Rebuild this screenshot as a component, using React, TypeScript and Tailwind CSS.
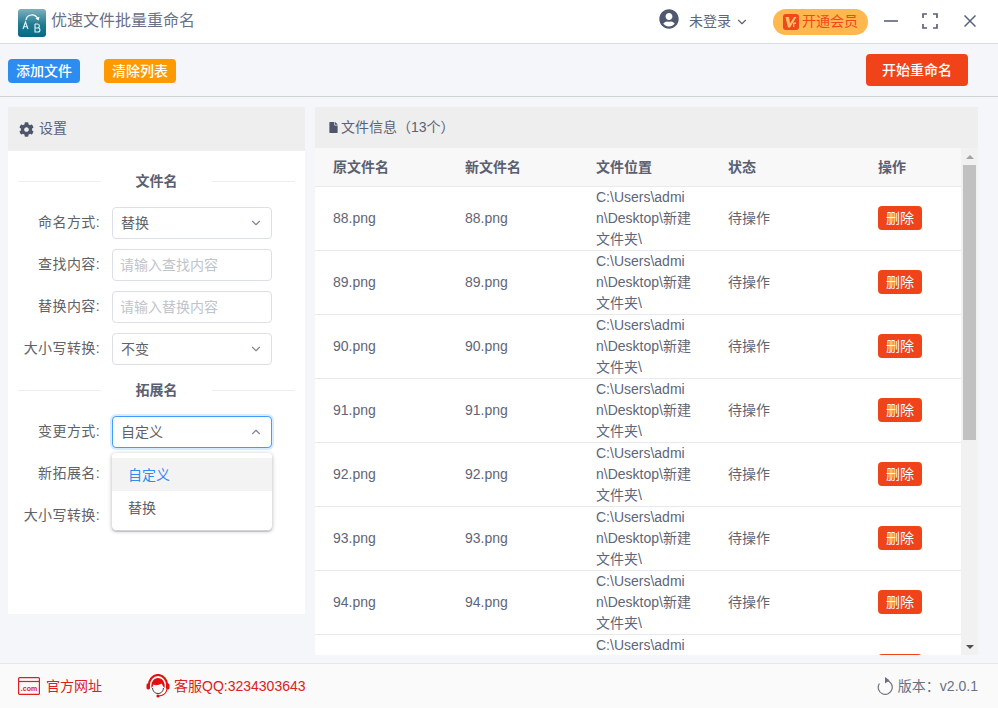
import React from 'react';
import { ChevronDown, ChevronUp } from 'lucide-react';
import { FaCog, FaFile, FaUserCircle } from 'react-icons/fa';

// Rows of the file table that fit in the visible area
const ROWS = ['88', '89', '90', '91', '92', '93', '94', '95'];
const COLUMNS = ['原文件名', '新文件名', '文件位置', '状态', '操作'];
const GRID = 'grid grid-cols-[132px_131px_132px_150px_1fr]';

function Logo() {
  return (
    <svg width="28" height="28" viewBox="0 0 28 28" className="shrink-0 mt-[3px]">
      <defs>
        <linearGradient id="logoBg" x1="0" y1="0" x2="0" y2="1">
          <stop offset="0" stopColor="#7fb0bc" />
          <stop offset="0.55" stopColor="#1f7b92" />
          <stop offset="1" stopColor="#056a84" />
        </linearGradient>
      </defs>
      <rect width="28" height="28" rx="3" fill="url(#logoBg)" />
      <path d="M8 11 C9 5 17 4 20 10" fill="none" stroke="#fff" strokeWidth="1.2" />
      <path d="M17.5 9.5 L20.6 11.5 L21.5 7.8 Z" fill="#fff" />
      <path d="M5 20 L7.5 13 L10 20 M6 17.8 H9" fill="none" stroke="#e8f4f7" strokeWidth="1.1" />
      <path d="M17 15 V23 H20 C22.6 23 22.6 19 20 19 H17 M17 15 H19.6 C22 15 22 19 19.6 19" fill="none" stroke="#e8f4f7" strokeWidth="1.1" />
    </svg>
  );
}

function VipIcon() {
  return (
    <svg width="16" height="16" viewBox="0 0 16 16" className="shrink-0">
      <rect width="16" height="16" rx="3" fill="#f0481a" />
      <path d="M2.5 3 L6 3 L7 9.5 L11 3 L13.5 3 L7 13.5 L5 13.5 Z" fill="#ffc06a" />
      <path d="M10 8.5 H13 V10 H11.3 V13 H10 Z" fill="#ffc06a" />
    </svg>
  );
}

function WindowButtons() {
  return (
    <div className="flex items-center text-[#5a6278] -mt-[2px]">
      <svg width="14" height="14" viewBox="0 0 14 14" className="ml-[16px]">
        <path d="M0 7 H14" stroke="currentColor" strokeWidth="1.6" />
      </svg>
      <svg width="16" height="16" viewBox="0 0 16 16" className="ml-[24px]">
        <path d="M1 5 V1 H5 M11 1 H15 V5 M15 11 V15 H11 M5 15 H1 V11" fill="none" stroke="currentColor" strokeWidth="1.7" />
      </svg>
      <svg width="12" height="12" viewBox="0 0 12 12" className="ml-[26px] mr-[22px]">
        <path d="M0.5 0.5 L11.5 11.5 M11.5 0.5 L0.5 11.5" stroke="currentColor" strokeWidth="1.5" />
      </svg>
    </div>
  );
}

function SectionTitle({ title }: { title: string }) {
  return (
    <div className="flex items-center h-[20px] px-[10px]">
      <div className="flex-1 h-px bg-[#ebeef5]" />
      <span className="w-[111px] text-center text-sm font-bold text-[#5a6070]">{title}</span>
      <div className="flex-1 h-px bg-[#ebeef5]" />
    </div>
  );
}

function Field({ label, children }: { label: string; children: React.ReactNode }) {
  return (
    <div className="flex items-center h-[32px]">
      <label className="w-[92px] pb-[2px] text-right text-sm tracking-[0.4px] text-[#606266] whitespace-nowrap">{label}</label>
      <div className="w-[160px] ml-[12px] relative">{children}</div>
    </div>
  );
}

function TextBox({ placeholder }: { placeholder: string }) {
  return (
    <div className="h-[32px] rounded border border-[#dcdfe6] bg-white pl-[7px] flex items-center text-sm text-[#c0c4cc]">
      {placeholder}
    </div>
  );
}

function SelectBox({ value, open }: { value: string; open?: boolean }) {
  return (
    <div
      className={
        open
          ? 'h-[32px] rounded border border-[#409eff] shadow-[0_0_0_2px_rgba(64,158,255,0.2)] bg-white pl-2 pr-[8px] flex items-center justify-between text-sm text-[#606266]'
          : 'h-[32px] rounded border border-[#dcdfe6] bg-white pl-2 pr-[8px] flex items-center justify-between text-sm text-[#606266]'
      }
    >
      <span>{value}</span>
      {open ? <ChevronUp size={14} color="#808695" /> : <ChevronDown size={14} color="#808695" />}
    </div>
  );
}

function SettingsPanel() {
  return (
    <div className="w-[297px] h-[507px] shrink-0 flex flex-col bg-white">
      <div className="h-[44px] bg-[#eeeeee] flex items-center pl-[11px] text-[#5b6175] text-sm">
        <FaCog size={15} color="#4f566b" />
        <span className="ml-[5px] pb-[2px]">设置</span>
      </div>
      <div className="pt-[20px] flex flex-col">
        <SectionTitle title="文件名" />
        <div className="flex flex-col gap-[10px] mt-[16px]">
          <Field label="命名方式:"><SelectBox value="替换" /></Field>
          <Field label="查找内容:"><TextBox placeholder="请输入查找内容" /></Field>
          <Field label="替换内容:"><TextBox placeholder="请输入替换内容" /></Field>
          <Field label="大小写转换:"><SelectBox value="不变" /></Field>
        </div>
        <div className="mt-[15px]"><SectionTitle title="拓展名" /></div>
        <div className="flex flex-col gap-[10px] mt-[16px]">
          <Field label="变更方式:">
            <SelectBox value="自定义" open />
            {/* open dropdown menu */}
            <div className="absolute left-0 top-[37px] z-10 w-[160px] h-[77px] py-[5px] rounded bg-white shadow-[0_1px_4px_rgba(0,0,0,0.3)] text-sm">
              <div className="h-[33px] pl-[16px] flex items-center bg-[#f3f3f3] text-[#2d8cf0]">自定义</div>
              <div className="h-[33px] pl-[16px] flex items-center text-[#606266]">替换</div>
            </div>
          </Field>
          <Field label="新拓展名:"><TextBox placeholder="" /></Field>
          {/* value sits under the open menu */}
          <Field label="大小写转换:"><SelectBox value="" /></Field>
        </div>
      </div>
    </div>
  );
}

function FileRow({ name }: { name: string }) {
  return (
    <div className={`${GRID} h-[64px] shrink-0 items-center border-b border-[#e8eaec] bg-white text-sm text-[#5f6577]`}>
      <div className="pl-[18px] pb-px">{name}.png</div>
      <div className="pl-[18px] pb-px">{name}.png</div>
      <div className="pl-[18px] pr-[18px] leading-[21px] break-all">C:\Users\admin\Desktop\新建文件夹\</div>
      <div className="pl-[18px] pb-px">待操作</div>
      <div className="pl-[18px] pb-px">
        <button className="w-[44px] h-[24px] rounded bg-[#f1431a] text-white text-sm flex items-center justify-center">删除</button>
      </div>
    </div>
  );
}

function Scrollbar() {
  return (
    <div className="w-[17px] shrink-0 bg-[#f1f1f1] flex flex-col items-center">
      <div className="h-[17px] flex items-center justify-center">
        <div className="w-0 h-0 border-x-[4px] border-x-transparent border-b-[4px] border-b-[#a3a3a3]" />
      </div>
      <div className="w-[13px] h-[275px] bg-[#c1c1c1]" />
      <div className="flex-1" />
      <div className="h-[17px] flex items-center justify-center">
        <div className="w-0 h-0 border-x-[4px] border-x-transparent border-t-[4px] border-t-[#505050]" />
      </div>
    </div>
  );
}

function FilePanel() {
  return (
    <div className="flex-1 h-[548px] flex flex-col mr-[20px]">
      <div className="h-[41px] bg-[#eeeeee] flex items-center pl-[13px] text-sm text-[#5b6175] shrink-0">
        <FaFile size={11} color="#4f566b" />
        <span className="ml-[2px] pb-[2px]">文件信息（13个）</span>
      </div>
      <div className="flex-1 flex min-h-0">
        <div className="flex-1 flex flex-col overflow-hidden">
          <div className={`${GRID} h-[39px] shrink-0 items-center border-b border-[#e8eaec] bg-[#f8f8f9] text-sm font-bold text-[#5a6070]`}>
            {COLUMNS.map(c => (
              <div key={c} className="pl-[18px]">{c}</div>
            ))}
          </div>
          {ROWS.map(r => (
            <FileRow key={r} name={r} />
          ))}
        </div>
        <Scrollbar />
      </div>
    </div>
  );
}

function ComIcon() {
  return (
    <svg width="22" height="18" viewBox="0 0 22 18" className="shrink-0">
      <rect x="0.6" y="0.6" width="20.8" height="16.8" rx="1" fill="none" stroke="#dc2020" strokeWidth="1.2" />
      <path d="M1 4.5 H21" stroke="#dc2020" strokeWidth="1.2" />
      <text x="11" y="14" textAnchor="middle" fontSize="7" fontWeight="700" fill="#dc2020" fontFamily="'Liberation Sans', sans-serif">.com</text>
    </svg>
  );
}

function HeadsetIcon() {
  return (
    <svg width="24" height="24" viewBox="0 0 24 24" className="shrink-0">
      {/* outer band */}
      <path d="M3 13 C2 6 7 1 12 1 C17 1 22 6 21 13" fill="none" stroke="#e01010" strokeWidth="2.2" />
      {/* hair */}
      <path d="M5.5 14 C4.5 8 8 4 12 4 C16 4 19.5 8 18.5 14 C17 13 16.5 10.5 15.5 9.5 C13 11.5 9 11.5 7.5 10.5 C7 12 6.5 13 5.5 14 Z" fill="#e01010" />
      <rect x="0.5" y="9.5" width="3.5" height="6" rx="1.4" fill="#e01010" />
      <rect x="20" y="9.5" width="3.5" height="6" rx="1.4" fill="#e01010" />
      {/* face */}
      <path d="M6.5 14 C7 18 9.5 19.5 12 19.5 C14.5 19.5 17 18 17.5 14" fill="none" stroke="#333" strokeWidth="1" />
      <path d="M21 15 C20.5 19 17 21.5 13 22" fill="none" stroke="#e01010" strokeWidth="1.1" />
      <circle cx="12" cy="22" r="1.6" fill="#e01010" />
    </svg>
  );
}

function Footer() {
  return (
    <div className="h-[45px] shrink-0 border-t border-[#e8e8e8] bg-[#fafafa] flex items-center pl-[18px] pr-[20px] text-sm">
      <ComIcon />
      <span className="ml-[6px] text-[#dc2020]">官方网址</span>
      <div className="ml-[44px]"><HeadsetIcon /></div>
      <span className="ml-[4px] text-[#dc2020]">客服QQ:3234303643</span>
      <div className="ml-auto flex items-center text-[#6a7085]">
        <svg width="16" height="18" viewBox="0 0 16 18" className="shrink-0">
          <path d="M9 3.4 A7 7 0 1 1 2.4 6.5" fill="none" stroke="#6b7184" strokeWidth="1.2" />
          <path d="M8 0 L12.5 3.2 L8 6.4 Z" fill="#6b7184" />
        </svg>
        <span className="ml-[5px]">版本：v2.0.1</span>
      </div>
    </div>
  );
}

export default function App() {
  return (
    <div className="w-[998px] h-[708px] flex flex-col overflow-hidden bg-[#f5f6f9] font-['Liberation_Sans','Noto_Sans_CJK_SC',sans-serif]">
      {/* Title bar */}
      <div className="h-[44px] shrink-0 bg-white border-b border-[#d8dce5] flex items-center pl-[18px]">
        <Logo />
        <span className="ml-[5px] pb-px text-base text-[#6a7085]">优速文件批量重命名</span>
        <div className="ml-auto flex items-center">
          <FaUserCircle size={20} color="#50586f" className="-mt-[6px]" />
          <span className="ml-[10px] pb-[2px] text-sm text-[#5f6577]">未登录</span>
          <ChevronDown size={14} color="#5f6577" className="ml-[4px]" />
          <div className="ml-[24px] w-[95px] h-[26px] rounded-[13px] bg-[#ffb74f] flex items-center justify-center text-sm text-[#f0481a]">
            <VipIcon />
            <span className="ml-[3px] pb-[2px]">开通会员</span>
          </div>
          <WindowButtons />
        </div>
      </div>

      {/* Toolbar */}
      <div className="h-[53px] shrink-0 border-b border-[#cfd2d6] flex items-center pl-[8px] pr-[30px]">
        <button className="mt-[2px] w-[72px] h-[24px] rounded bg-[#2d8cf0] text-white text-sm font-medium flex items-center justify-center">添加文件</button>
        <button className="mt-[2px] ml-[24px] w-[72px] h-[24px] rounded bg-[#ff9900] text-white text-sm font-medium flex items-center justify-center">清除列表</button>
        <button className="ml-auto w-[102px] h-[32px] rounded bg-[#f1431a] text-white text-sm font-medium flex items-center justify-center">开始重命名</button>
      </div>

      {/* Main area */}
      <div className="flex-1 min-h-0 flex gap-[10px] pl-[8px] pt-[10px]">
        <SettingsPanel />
        <FilePanel />
      </div>

      <Footer />
    </div>
  );
}
